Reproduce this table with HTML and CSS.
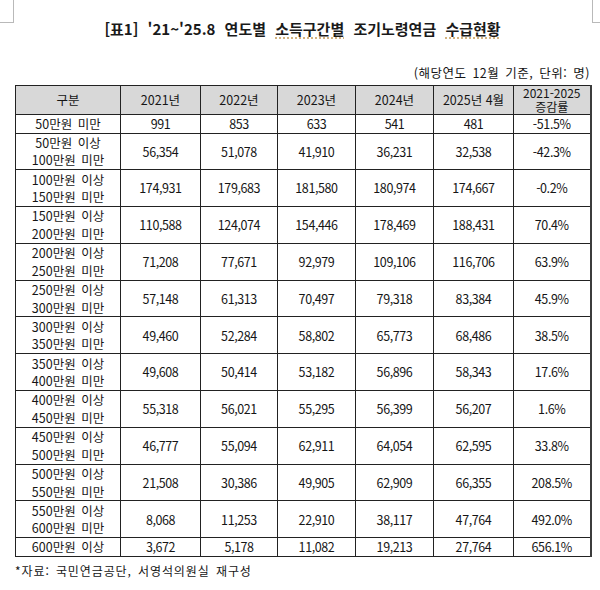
FILE: index.html
```html
<!DOCTYPE html>
<html lang="ko">
<head>
<meta charset="utf-8">
<link rel="stylesheet" href="styles.css">
</head>
<body>
<div class="corner corner-left"></div>
<div class="corner corner-right"></div>
<div class="page">
  <h1 class="title">[표1] '21~'25.8 연도별 <span class="squiggle">소득구간별</span> 조기노령연금 <span class="squiggle">수급현황</span></h1>
  <p class="note">(해당연도 12월 기준, 단위: 명)</p>
  <table class="data">
    <colgroup>
      <col class="c0"><col class="c1"><col class="c2"><col class="c3"><col class="c4"><col class="c5"><col class="c6">
    </colgroup>
    <thead>
      <tr class="head">
        <th>구분</th><th>2021년</th><th>2022년</th><th>2023년</th><th>2024년</th><th>2025년 4월</th><th class="two"><span class="ln">2021-2025</span><span class="ln">증감률</span></th>
      </tr>
    </thead>
    <tbody>
      <tr class="single"><td>50만원 미만</td><td>991</td><td>853</td><td>633</td><td>541</td><td>481</td><td>-51.5%</td></tr>
      <tr class="double"><td>50만원 이상<br>100만원 미만</td><td>56,354</td><td>51,078</td><td>41,910</td><td>36,231</td><td>32,538</td><td>-42.3%</td></tr>
      <tr class="double"><td>100만원 이상<br>150만원 미만</td><td>174,931</td><td>179,683</td><td>181,580</td><td>180,974</td><td>174,667</td><td>-0.2%</td></tr>
      <tr class="double"><td>150만원 이상<br>200만원 미만</td><td>110,588</td><td>124,074</td><td>154,446</td><td>178,469</td><td>188,431</td><td>70.4%</td></tr>
      <tr class="double"><td>200만원 이상<br>250만원 미만</td><td>71,208</td><td>77,671</td><td>92,979</td><td>109,106</td><td>116,706</td><td>63.9%</td></tr>
      <tr class="double"><td>250만원 이상<br>300만원 미만</td><td>57,148</td><td>61,313</td><td>70,497</td><td>79,318</td><td>83,384</td><td>45.9%</td></tr>
      <tr class="double"><td>300만원 이상<br>350만원 미만</td><td>49,460</td><td>52,284</td><td>58,802</td><td>65,773</td><td>68,486</td><td>38.5%</td></tr>
      <tr class="double"><td>350만원 이상<br>400만원 미만</td><td>49,608</td><td>50,414</td><td>53,182</td><td>56,896</td><td>58,343</td><td>17.6%</td></tr>
      <tr class="double"><td>400만원 이상<br>450만원 미만</td><td>55,318</td><td>56,021</td><td>55,295</td><td>56,399</td><td>56,207</td><td>1.6%</td></tr>
      <tr class="double"><td>450만원 이상<br>500만원 미만</td><td>46,777</td><td>55,094</td><td>62,911</td><td>64,054</td><td>62,595</td><td>33.8%</td></tr>
      <tr class="double"><td>500만원 이상<br>550만원 미만</td><td>21,508</td><td>30,386</td><td>49,905</td><td>62,909</td><td>66,355</td><td>208.5%</td></tr>
      <tr class="double"><td>550만원 이상<br>600만원 미만</td><td>8,068</td><td>11,253</td><td>22,910</td><td>38,117</td><td>47,764</td><td>492.0%</td></tr>
      <tr class="single"><td>600만원 이상</td><td>3,672</td><td>5,178</td><td>11,082</td><td>19,213</td><td>27,764</td><td>656.1%</td></tr>
    </tbody>
  </table>
  <p class="source">*자료: 국민연금공단, 서영석의원실 재구성</p>
</div>
</body>
</html>
```
FILE: styles.css
```css
html, body {
  margin: 0;
  padding: 0;
  background: #ffffff;
}
body {
  width: 600px;
  height: 590px;
  position: relative;
  overflow: hidden;
  font-family: "Noto Sans CJK KR", "Noto Sans", sans-serif;
  color: #151515;
}
.corner {
  position: absolute;
  top: 0;
  width: 13px;
  height: 22px;
}
.corner-left {
  left: 0;
  border-right: 1px solid #b9b9b9;
  border-bottom: 1px solid #b9b9b9;
}
.corner-right {
  right: -6px;
  border-left: 1px solid #b9b9b9;
  border-bottom: 1px solid #b9b9b9;
}
.page {
  padding: 18px 10px 0 15px;
}
.title {
  margin: 0;
  text-align: center;
  font-size: 15px;
  font-weight: 700;
  line-height: 22px;
  color: #1a1a1a;
  word-spacing: 5px;
}
.squiggle {
  text-decoration: underline dotted #c59a55;
  text-underline-offset: 3px;
}
.note {
  margin: 25px 0 0;
  text-align: right;
  font-size: 12.5px;
  line-height: 16px;
  letter-spacing: 0.5px;
  word-spacing: 2px;
}
.data {
  margin-top: 4px;
  width: 575px;
  border-collapse: collapse;
  table-layout: fixed;
  border-right: 2px solid #3c3c3c;
}
.c0 { width: 105px; }
.c1 { width: 80px; }
.c2 { width: 77px; }
.c3 { width: 78px; }
.c4 { width: 78px; }
.c5 { width: 80px; }
.c6 { width: 77px; }
.data th, .data td {
  border: 1px solid #222;
  padding: 0;
  text-align: center;
  vertical-align: middle;
  font-size: 12.5px;
  font-weight: 400;
  line-height: 17.5px;
}
.data td:first-child {
  word-spacing: 2px;
}
.data td + td {
  letter-spacing: -0.4px;
}
.head th {
  background: #d8d8d8;
  height: 28px;
}
.head th.two {
  font-size: 12px;
  line-height: 14px;
}
.ln {
  display: block;
}
.single td {
  height: 17px;
}
.double td {
  height: 35.8px;
}
.source {
  margin: 6px 0 0;
  font-size: 12px;
  line-height: 16px;
  letter-spacing: 0.9px;
  word-spacing: 2px;
}
```
